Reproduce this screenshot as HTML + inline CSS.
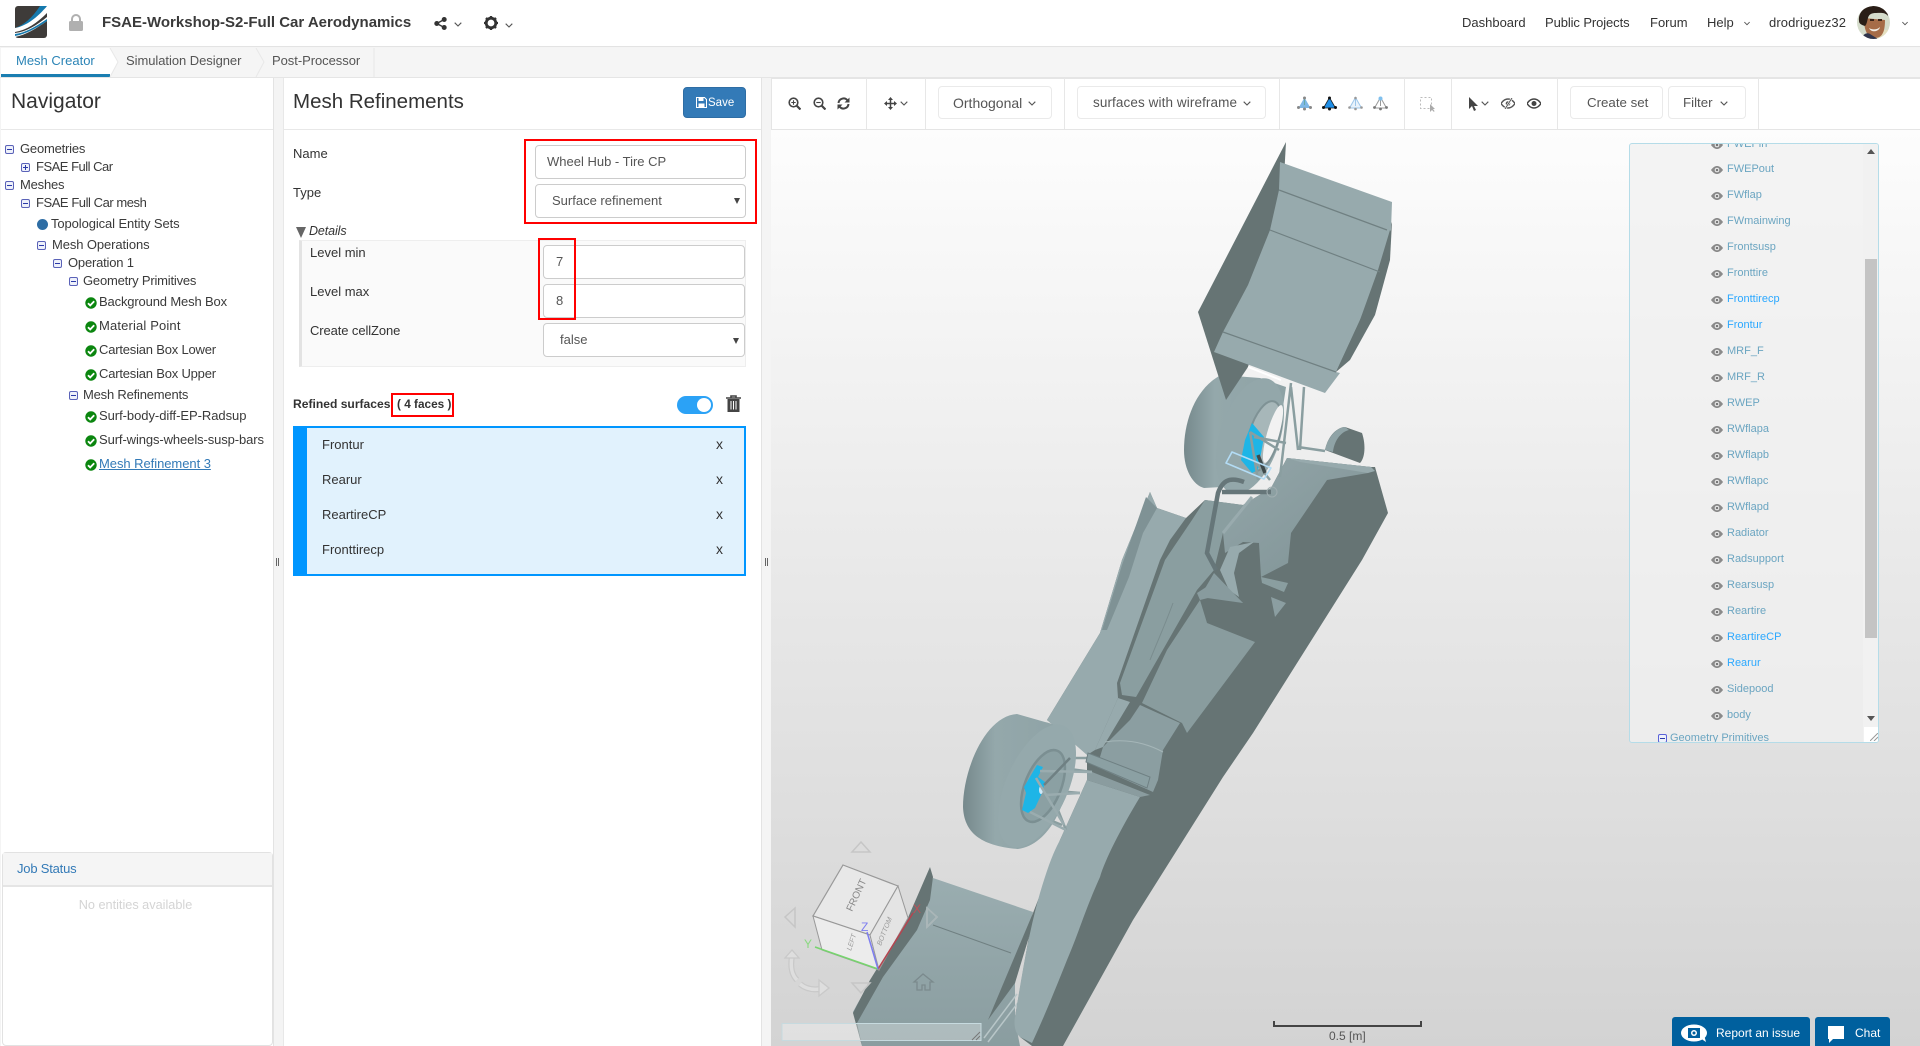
<!DOCTYPE html>
<html lang="en"><head><meta charset="utf-8"><title>FSAE-Workshop-S2-Full Car Aerodynamics</title>
<style>
*{box-sizing:border-box}
html,body{margin:0;padding:0;width:1920px;height:1046px;overflow:hidden;background:#f4f4f4;font-family:"Liberation Sans",sans-serif;font-size:13px;color:#333}
.a{position:absolute}
.t{position:absolute;white-space:nowrap;line-height:20px;height:20px}
.ar{font-family:"Liberation Sans",Arial,sans-serif;color:#555}
.tree{letter-spacing:-.2px;color:#3a3a3a}
.bx{position:absolute;width:9px;height:9px;border:1px solid #5a62b8;border-radius:2px;background:#eef1fa}
.bx:before{content:"";position:absolute;left:1px;right:1px;top:3px;height:1px;background:#2b3aa8}
.bx.p:after{content:"";position:absolute;top:1px;bottom:1px;left:3px;width:1px;background:#2b3aa8}
.inp{position:absolute;background:#fff;border:1px solid #ccc;border-radius:4px}
.red{position:absolute;border:2px solid #f00}
.btn{position:absolute;height:33px;border:1px solid #eaeaea;border-radius:4px;background:#fff}
.sep{position:absolute;top:78px;height:51px;width:1px;background:#e7e7e7}
.fi{position:absolute;left:1727px;font-size:11px;color:#6ba5c1;line-height:14px;white-space:nowrap}
.fi.s{color:#2ba8ff}
.ey{position:absolute;left:1711px;width:12px;height:8px}
.chev{position:absolute;width:8px;height:5px}
</style></head><body>
<svg width="0" height="0" style="position:absolute">
<defs>
<linearGradient id="wg" x1="0" y1="0" x2="0" y2="1"><stop offset="0" stop-color="#9aadb0"/><stop offset="1" stop-color="#8a9da0"/></linearGradient>
<linearGradient id="tg" x1="0" y1="0" x2="1" y2="0"><stop offset="0" stop-color="#76898c"/><stop offset=".3" stop-color="#94a8ab"/><stop offset="1" stop-color="#8ea2a5"/></linearGradient>
<linearGradient id="eg" x1="0" y1="0" x2="1" y2="1"><stop offset="0" stop-color="#93a6a9"/><stop offset="1" stop-color="#7f9295"/></linearGradient>
</defs>
<symbol id="eye" viewBox="0 0 12 8"><path d="M0 4C2 1.200 4 0 6 0s4 1.200 6 4c-2 2.800-4 4-6 4S2 6.800 0 4z" fill="#8a8a8a"/><circle cx="6" cy="4" r="2.300" fill="#f3f3f3"/><circle cx="6" cy="4" r="1.300" fill="#777"/></symbol>
<symbol id="chk" viewBox="0 0 12 12"><circle cx="6" cy="6" r="5.700" fill="#0b860f"/><path d="M3 6.200l2.200 2.200L9.200 4.200" fill="none" stroke="#fff" stroke-width="1.800"/></symbol>
<symbol id="ch" viewBox="0 0 8 5"><path d="M.7.7L4 4l3.300-3.300" fill="none" stroke="#555" stroke-width="1.100"/></symbol>
</svg>

<!-- header -->
<div class="a" style="left:0;top:0;width:1920px;height:47px;background:#fff;border-bottom:1px solid #e3e3e3"></div>
<svg class="a" style="left:15px;top:6px" width="32" height="32" viewBox="0 0 32 32"><rect width="32" height="32" rx="3" fill="#3e3b39"/><path d="M0 22C10 20 21 12 32 0v7C22 17 12 24 0 26z" fill="#fff"/><path d="M0 22C9 19 17 12 25 0h7C22 12 11 20 0 22z" fill="#1579ad"/><path d="M0 27C11 26 22 19 32 11v4C22 22 11 29 0 31z" fill="#fff"/><path d="M0 28c10-1 20-7 32-15v2C22 22 11 28 0 30z" fill="#1579ad"/></svg>
<svg class="a" style="left:69px;top:14px" width="14" height="17" viewBox="0 0 14 17"><path d="M3 8V5a4 4 0 0 1 8 0v3" fill="none" stroke="#b0b0b0" stroke-width="2"/><rect y="7" width="14" height="10" rx="1.500" fill="#b0b0b0"/></svg>
<div class="t" style="left:102px;top:13px;font-size:15px;font-weight:bold;color:#3a3a3a">FSAE-Workshop-S2-Full Car Aerodynamics</div>
<svg class="a" style="left:434px;top:17px" width="13" height="13" viewBox="0 0 13 13" fill="#333"><circle cx="2.800" cy="6.500" r="2.500"/><circle cx="10.200" cy="2.500" r="2.500"/><circle cx="10.200" cy="10.500" r="2.500"/><path d="M2.800 6.500l7.400-4M2.800 6.500l7.400 4" stroke="#333" stroke-width="1.300"/></svg>
<svg class="chev" style="left:454px;top:22px"><use href="#ch"/></svg>
<svg class="a" style="left:484px;top:16px" width="14" height="14" viewBox="0 0 14 14"><circle cx="7" cy="7" r="4.800" fill="none" stroke="#333" stroke-width="2.800"/><path d="M7 0v3M7 11v3M0 7h3M11 7h3M2 2l2 2M10 10l2 2M12 2l-2 2M4 10l-2 2" stroke="#333" stroke-width="2.300"/></svg>
<svg class="chev" style="left:505px;top:23px"><use href="#ch"/></svg>
<div class="t" style="left:1462px;top:13px">Dashboard</div>
<div class="t" style="left:1545px;top:13px;letter-spacing:-.1px">Public Projects</div>
<div class="t" style="left:1650px;top:13px">Forum</div>
<div class="t" style="left:1707px;top:13px">Help</div>
<svg class="chev" style="left:1743px;top:21px;transform:scale(.8)"><use href="#ch"/></svg>
<div class="t" style="left:1769px;top:13px;letter-spacing:.1px">drodriguez32</div>
<svg class="a" style="left:1857px;top:6px" width="33" height="33" viewBox="0 0 33 33"><defs><clipPath id="av"><circle cx="16.500" cy="16.500" r="16.500"/></clipPath></defs><g clip-path="url(#av)"><rect width="33" height="33" fill="#d5dccb"/><rect y="24" x="20" width="13" height="9" fill="#e6e0c0"/><path d="M7 12c0 12 3 20 11 20s10-8 10-18z" fill="#a66c48"/><path d="M2 15C1 5 9 0 17 0s14 4 14 10c-3-4-8-3-12-3-4 0-7 1-8 5-1 3-1 6-3 8-3-1-6-2-6-5z" fill="#2a1e17"/><path d="M4 33c2-5 6-7 9-5l8 5z" fill="#30344a"/><path d="M12 22c3 2 8 2 11-1-1 5-9 6-11 1z" fill="#f3eee6"/><rect x="13" y="13" width="4" height="2" fill="#3a2418"/><rect x="21" y="13" width="4" height="2" fill="#3a2418"/></g></svg>
<svg class="chev" style="left:1901px;top:21px;transform:scale(.8)"><use href="#ch"/></svg>

<!-- tabs -->
<div class="a" style="left:0;top:48px;width:1920px;height:30px;background:#f5f5f5;border-bottom:1px solid #e5e5e5"></div>
<div class="a" style="left:1px;top:48px;width:109px;height:29px;background:#fff;border-bottom:3px solid #1a7eb1"></div>
<svg class="a" style="left:108px;top:48px" width="270" height="29" viewBox="0 0 270 29" fill="none" stroke="#e8e8e8"><path d="M2 0l8 14-8 15" fill="#fff"/><path d="M148 0l8 14-8 15M266 0v29"/></svg>
<div class="t" style="left:16px;top:51px;color:#2b84b6">Mesh Creator</div>
<div class="t" style="left:126px;top:51px;color:#555;letter-spacing:-.05px">Simulation Designer</div>
<div class="t" style="left:272px;top:51px;color:#555;letter-spacing:-.05px">Post-Processor</div>

<!-- left panel -->
<div class="a" style="left:1px;top:78px;width:273px;height:968px;background:#fff;border-right:1px solid #e3e3e3"></div>
<div class="a" style="left:1px;top:129px;width:272px;height:1px;background:#e8e8e8"></div>
<div class="t" style="left:11px;top:92px;font-size:21px;color:#333">Navigator</div>
<div class="bx" style="left:5px;top:145px"></div><div class="t tree" style="left:20px;top:139px">Geometries</div>
<div class="bx p" style="left:21px;top:163px"></div><div class="t tree" style="left:36px;top:157px;letter-spacing:-.5px">FSAE Full Car</div>
<div class="bx" style="left:5px;top:181px"></div><div class="t tree" style="left:20px;top:175px">Meshes</div>
<div class="bx" style="left:21px;top:199px"></div><div class="t tree" style="left:36px;top:193px;letter-spacing:-.45px">FSAE Full Car mesh</div>
<div class="a" style="left:37px;top:219px;width:11px;height:11px;border-radius:50%;background:#2e6da4"></div><div class="t tree" style="left:51px;top:214px;letter-spacing:-.1px">Topological Entity Sets</div>
<div class="bx" style="left:37px;top:241px"></div><div class="t tree" style="left:52px;top:235px;letter-spacing:-.1px">Mesh Operations</div>
<div class="bx" style="left:53px;top:259px"></div><div class="t tree" style="left:68px;top:253px">Operation 1</div>
<div class="bx" style="left:69px;top:277px"></div><div class="t tree" style="left:83px;top:271px">Geometry Primitives</div>
<svg class="a" style="left:85px;top:297px" width="12" height="12"><use href="#chk"/></svg><div class="t tree" style="left:99px;top:292px;letter-spacing:-.15px">Background Mesh Box</div>
<svg class="a" style="left:85px;top:321px" width="12" height="12"><use href="#chk"/></svg><div class="t tree" style="left:99px;top:316px;letter-spacing:.15px">Material Point</div>
<svg class="a" style="left:85px;top:345px" width="12" height="12"><use href="#chk"/></svg><div class="t tree" style="left:99px;top:340px">Cartesian Box Lower</div>
<svg class="a" style="left:85px;top:369px" width="12" height="12"><use href="#chk"/></svg><div class="t tree" style="left:99px;top:364px">Cartesian Box Upper</div>
<div class="bx" style="left:69px;top:391px"></div><div class="t tree" style="left:83px;top:385px">Mesh Refinements</div>
<svg class="a" style="left:85px;top:411px" width="12" height="12"><use href="#chk"/></svg><div class="t tree" style="left:99px;top:406px;letter-spacing:-.05px">Surf-body-diff-EP-Radsup</div>
<svg class="a" style="left:85px;top:435px" width="12" height="12"><use href="#chk"/></svg><div class="t tree" style="left:99px;top:430px;letter-spacing:-.1px">Surf-wings-wheels-susp-bars</div>
<svg class="a" style="left:85px;top:459px" width="12" height="12"><use href="#chk"/></svg><div class="t tree" style="left:99px;top:454px;color:#337ab7;text-decoration:underline;letter-spacing:-.05px">Mesh Refinement 3</div>
<div class="a" style="left:2px;top:852px;width:271px;height:194px;border:1px solid #e2e2e2;border-radius:4px;background:#fff"></div>
<div class="a" style="left:3px;top:853px;width:269px;height:34px;background:#f5f5f5;border-bottom:2px solid #e5e5e5"></div>
<div class="t" style="left:17px;top:859px;color:#337ab7;letter-spacing:-.2px">Job Status</div>
<div class="t" style="left:1px;width:269px;top:895px;text-align:center;color:#d4d4d4;font-size:12.700px">No entities available</div>
<div class="a" style="left:276px;top:558px;width:1px;height:8px;background:#666;box-shadow:2px 0 #666"></div>

<!-- middle panel -->
<div class="a" style="left:283px;top:78px;width:479px;height:968px;background:#fff;border-left:1px solid #e8e8e8;border-right:1px solid #e3e3e3"></div>
<div class="a" style="left:284px;top:129px;width:477px;height:1px;background:#e8e8e8"></div>
<div class="t" style="left:293px;top:92px;font-size:20.500px;color:#333">Mesh Refinements</div>
<div class="a" style="left:683px;top:87px;width:63px;height:31px;background:#337ab7;border:1px solid #2e6da4;border-radius:4px"></div>
<svg class="a" style="left:696px;top:97px" width="11" height="11" viewBox="0 0 11 11"><path d="M.5.500h8l2 2v8H.5z" fill="none" stroke="#fff"/><rect x="2.500" y="1" width="5" height="3" fill="#fff"/><rect x="2.500" y="6.500" width="6" height="3.500" fill="#fff"/></svg>
<div class="t" style="left:708px;top:93px;color:#fff;font-size:11.500px">Save</div>

<div class="t" style="left:293px;top:144px">Name</div>
<div class="t" style="left:293px;top:183px">Type</div>
<div class="inp" style="left:535px;top:145px;width:211px;height:34px"></div>
<div class="t ar" style="left:547px;top:152px">Wheel Hub - Tire CP</div>
<div class="inp" style="left:535px;top:184px;width:211px;height:34px"></div>
<div class="t ar" style="left:552px;top:191px">Surface refinement</div>
<div class="a" style="left:734px;top:198px;border:3px solid transparent;border-top:6px solid #444;border-bottom:0"></div>
<div class="red" style="left:524px;top:139px;width:233px;height:85px"></div>

<div class="a" style="left:296px;top:227px;border:5.500px solid transparent;border-top:11px solid #666;border-bottom:0"></div>
<div class="t" style="left:309px;top:221px;font-style:italic;font-size:12.500px;letter-spacing:-.1px">Details</div>
<div class="a" style="left:299px;top:240px;width:447px;height:127px;background:#fafafa;border:1px solid #eee;border-left:3px solid #e3e3e3"></div>
<div class="t" style="left:310px;top:243px">Level min</div>
<div class="t" style="left:310px;top:282px">Level max</div>
<div class="t" style="left:310px;top:321px;letter-spacing:-.1px">Create cellZone</div>
<div class="inp" style="left:543px;top:245px;width:202px;height:34px"></div>
<div class="t ar" style="left:556px;top:252px">7</div>
<div class="inp" style="left:543px;top:284px;width:202px;height:34px"></div>
<div class="t ar" style="left:556px;top:291px">8</div>
<div class="inp" style="left:543px;top:323px;width:202px;height:34px"></div>
<div class="t ar" style="left:560px;top:330px">false</div>
<div class="a" style="left:733px;top:338px;border:3px solid transparent;border-top:6px solid #444;border-bottom:0"></div>
<div class="red" style="left:538px;top:238px;width:38px;height:82px"></div>

<div class="t" style="left:293px;top:394px;font-weight:bold;font-size:12.100px">Refined surfaces</div>
<div class="red" style="left:391px;top:393px;width:63px;height:24px"></div>
<div class="t" style="left:397px;top:394px;font-weight:bold;font-size:11.800px">( 4 faces )</div>
<div class="a" style="left:677px;top:396px;width:36px;height:18px;border-radius:9px;background:#2ba2f6"></div>
<div class="a" style="left:697px;top:398px;width:14px;height:14px;border-radius:50%;background:#fff"></div>
<svg class="a" style="left:726px;top:395px" width="15" height="17" viewBox="0 0 15 17"><path d="M0 3h15M5 3V1h5v2" fill="none" stroke="#444" stroke-width="1.600"/><path d="M1.500 4h12v13h-12z" fill="#444"/><path d="M5 6v8.500M7.500 6v8.500M10 6v8.500" stroke="#fff" stroke-width="1"/></svg>
<div class="a" style="left:293px;top:426px;width:453px;height:150px;background:#e1f2fd;border:2px solid #0096ff;border-left:14px solid #0096ff"></div>
<div class="t" style="left:322px;top:435px">Frontur</div><div class="t" style="left:716px;top:434px;font-size:14px">x</div>
<div class="t" style="left:322px;top:470px">Rearur</div><div class="t" style="left:716px;top:469px;font-size:14px">x</div>
<div class="t" style="left:322px;top:505px">ReartireCP</div><div class="t" style="left:716px;top:504px;font-size:14px">x</div>
<div class="t" style="left:322px;top:540px">Fronttirecp</div><div class="t" style="left:716px;top:539px;font-size:14px">x</div>
<div class="a" style="left:765px;top:558px;width:1px;height:8px;background:#666;box-shadow:2px 0 #666"></div>

<!-- viewer -->
<div class="a" style="left:771px;top:130px;width:1149px;height:916px;background:linear-gradient(#fdfdfd,#d3d3d3)"></div>
<svg class="a" style="left:771px;top:130px" width="1149" height="916" viewBox="771 130 1149 916">
<!-- front wing -->
<path d="M933 878L1033 912 1015 983 1015 1020 1020 1046H862L853 1012C880 960 920 925 933 878z" fill="url(#wg)"/>
<path d="M927 857l6 20-3 23-13 30-34 47-26 46 5 23-9-33 17-33 37-60 23-53z" fill="#667474"/>
<path d="M933 925L1011 953" stroke="#708082" stroke-width="1" fill="none"/>
<path d="M1033 913L988 1020 1015 983 1032 927z" fill="#667474"/>
<path d="M984 1038L1017 994M988 1042L1020 1000" stroke="#b8c6c8" stroke-width="1.500" fill="none"/>

<!-- silhouette base -->
<path d="M1150 492L1157 508 1186 518 1205 500 1243 505 1271 488 1287 458 1371 467 1375 467 1388 513 1362 560 1253 733 1223 777 1133 920 1063 1046H1032L1020 1037 1015 1017 1033 913 1047 877 1060 840 1087 780 1087 752 1047 720 1100 633 1122 560z" fill="#667474"/>
<!-- nose light -->
<path d="M1020 1037C1014 1032 1014 1022 1015 1017 1022 975 1028 935 1040 893 1047 870 1052 855 1060 840L1087 780 1140 797C1120 830 1105 860 1100 877 1085 910 1078 935 1067 960 1055 990 1045 1015 1032 1043z" fill="#97aaad"/>
<!-- sidepod -->
<path d="M1047 720L1100 633 1122 560 1150 492 1157 508 1186 518 1170 540 1160 560 1117 683 1118 698 1095 750 1087 755z" fill="#97aaad"/>
<path d="M1146 497L1157 508 1143 533 1129 577 1107 630 1102 630 1122 565z" fill="#7f9295"/>
<!-- centre -->
<path d="M1205 500L1243 505 1223 533 1214 570 1197 590 1136 697 1122 695 1120 683 1165 560 1192 520z" fill="#8a9ea0"/>
<path d="M1173 603C1165 625 1158 640 1150 660" stroke="#7a8c8e" fill="none"/>
<path d="M1118 698L1130 702 1103 747 1095 750z" fill="#97aaad"/>
<!-- cockpit panel -->
<path d="M1200 600L1207 623 1255 642 1187 733 1182 723 1142 703 1167 650z" fill="#899c9e"/>
<path d="M1197 593L1217 580 1243 603 1220 595 1200 600z" fill="#889b9e"/>
<!-- nose plate -->
<path d="M1140 705L1180 723 1163 750 1158 780 1153 792 1097 767 1103 747 1130 720z" fill="#8b9ea1"/>
<path d="M1105 742C1130 738 1150 745 1163 752" stroke="#a5b6b8" stroke-width="1" fill="none"/>
<path d="M1087 770L1150 795 1140 797 1087 780z" fill="#8a9c9f"/>
<!-- engine cover -->
<path d="M1287 458L1371 467 1368 473 1327 480 1291 533 1288 563 1261 577 1259 543 1243 542 1225 553 1223 533 1243 505 1271 488z" fill="url(#eg)"/>
<path d="M1287 458L1371 467 1375 471 1368 473 1300 462z" fill="#97aaad"/>
<path d="M1220 570L1230 547 1254 542 1239 553 1234 573 1239 597 1229 590z" fill="#97aaad"/>
<path d="M1200 597L1243 603 1214 573z" fill="#889b9e"/>
<path d="M1271 597L1286 603 1275 617z" fill="#8b9ea1"/>
<path d="M1261 577L1288 583 1284 592 1262 583z" fill="#8a9ea0"/>
<!-- rear-side round fin -->
<path d="M1325 450C1328 435 1338 427 1345 427L1362 433C1366 445 1365 458 1360 463z" fill="#667474"/>
<path d="M1325 450C1328 436 1338 427 1345 427L1349 430C1340 432 1334 442 1333 452z" fill="#8fa3a6"/>
<!-- rear tire -->
<path d="M1221 375C1196 388 1184 420 1184 450 1184 470 1193 485 1204 488L1240 486 1278 440 1286 387 1260 378z" fill="url(#tg)"/>
<ellipse cx="1250" cy="436" rx="30" ry="60" transform="rotate(18 1250 436)" fill="#93a7aa"/>
<ellipse cx="1264" cy="436" rx="15" ry="36" transform="rotate(16 1264 436)" fill="#a7b7b9" stroke="#7f9295" stroke-width="2"/>
<ellipse cx="1273" cy="434" rx="6" ry="30" transform="rotate(16 1273 434)" fill="#f2f2f2"/>
<path d="M1252 423L1264 437 1258 470 1252 473 1241 460 1245 440z" fill="#1eb5e6"/>
<g fill="none" stroke="#8a9ea0" stroke-width="2.500"><path d="M1291 383L1280 477M1291 387L1298 450M1304 387L1300 450M1250 432L1279 450M1254 437L1286 443M1250 432L1258 480M1254 460L1270 480M1298 447L1325 451"/></g>
<path d="M1258 455l7 18" stroke="#3f4a4b" stroke-width="3.500"/>
<path d="M1232 452L1271 468 1264 479 1226 463z" fill="none" stroke="#b3dcf5" stroke-width="1.600" stroke-linejoin="round"/>
<path d="M1223 533L1252 497" stroke="#99abae" stroke-width="3"/>
<path d="M1244 482C1228 476 1222 482 1218 493L1207 553 1216 570M1222 492L1271 492" fill="none" stroke="#667679" stroke-width="4.500"/>
<circle cx="1272" cy="492" r="5" fill="none" stroke="#a0aeb0"/>
<!-- rear wing -->
<path d="M1286 142L1198 312 1226 400 1248 367 1280 250z" fill="#667474"/>
<path d="M1392 222L1390 260 1375 315 1350 360 1336 372z" fill="#667474"/>
<path d="M1280 162L1392 202 1391 230 1381 270 1360 320 1336 372 1340 373 1325 393 1214 352 1223 332 1248 285 1270 230 1279 190z" fill="#97aaad"/>
<path d="M1391 232L1386 262 1372 305 1345 360 1336 372 1360 320 1378 270 1390 230z" fill="#667474"/>
<g stroke="#708082" stroke-width="1.200" fill="none"><path d="M1279 190L1387 230M1270 230L1380 272M1223 332L1336 372"/></g>
<path d="M1248 367L1281 380" stroke="#fff" stroke-width="2"/>
<!-- front tire -->
<g fill="none" stroke="#8a9ea0" stroke-width="2.500"><path d="M1040 765L1092 772M1070 758L1090 758M1045 790L1080 793M1036 778L1062 820M1030 812L1062 825M1050 790L1066 830"/></g>
<path d="M1017 714C985 716 963 770 963 807 964 832 980 846 1018 849 1050 845 1070 800 1070 760 1070 735 1060 725 1045 722z" fill="url(#tg)"/>
<ellipse cx="1037" cy="786" rx="31" ry="66" transform="rotate(24 1037 786)" fill="#95a9ac"/>
<ellipse cx="1043" cy="786" rx="18" ry="38" transform="rotate(22 1043 786)" fill="#8ba0a3" stroke="#7b8f92" stroke-width="2.500"/>
<path d="M1037 765L1043 767 1038 777 1045 782 1042 793 1035 808 1028 813 1022 810 1026 793 1024 787z" fill="#1eb5e6"/>
<ellipse cx="1041" cy="790" rx="2" ry="4" fill="#cfe8f8"/>
<g fill="none" stroke="#9aacaf" stroke-width="2.500"><path d="M1040 771L1092 772M1045 795L1080 793M1036 778L1064 825M1030 812L1066 830"/></g>
<path d="M1044 785L1070 758" stroke="#6f8083" stroke-width="2.500"/>
<path d="M1088 753L1150 777 1147 788 1086 762z" fill="#8ba0a3" stroke="#6f8083"/>
<!-- gizmo -->
<g fill="none" stroke="#c6c6c6" stroke-width="1.500"><path d="M861 842l-9 10h18zM795 908l-10 9 10 10zM927 908l10 9-10 10zM852 983l9 10 9-10z"/></g>
<path d="M927 908l10 9-10 10z" fill="none" stroke="#a9b6b8" stroke-width="1.500"/>
<g fill="none"><path d="M792 956C790 968 792 975 797 980M800 984C806 989 813 990 820 989" stroke="#c9c9c9" stroke-width="6"/><path d="M792 956C790 968 792 975 797 980M800 984C806 989 813 990 820 989" stroke="#dedede" stroke-width="3.500"/></g>
<path d="M792 950l-7 8h14zM829 988l-10-8v16z" fill="#dedede" stroke="#c9c9c9" stroke-width="1.300"/>
<path d="M843 865L898 886 870 935 813 916z" fill="#e8e8e8" stroke="#999" stroke-width="1.200"/>
<path d="M813 916L870 935 879 970 822 950z" fill="#ececec" stroke="#999" stroke-width="1"/>
<path d="M870 935L898 886 908 918 879 970z" fill="#e4e4e4" stroke="#999" stroke-width="1"/>
<text x="852" y="912" font-size="10" fill="#888" transform="rotate(-65 852 912)" font-family="Liberation Sans,sans-serif">FRONT</text>
<text x="851" y="951" font-size="7" fill="#999" font-style="italic" transform="rotate(-72 851 951)" font-family="Liberation Sans,sans-serif">LEFT</text>
<text x="881" y="946" font-size="7" fill="#999" font-style="italic" transform="rotate(-68 881 946)" font-family="Liberation Sans,sans-serif">BOTTOM</text>
<path d="M878 969L913 913" stroke="#b5444f" stroke-width="1.500"/><path d="M878 969L815 947" stroke="#77d46e" stroke-width="1.500"/><path d="M878 969L867 932" stroke="#7d7df0" stroke-width="1.500"/>
<text x="913" y="913" font-size="12" fill="#c05058" font-family="Liberation Sans,sans-serif">X</text>
<text x="804" y="948" font-size="12" fill="#8ad980" font-family="Liberation Sans,sans-serif">Y</text>
<text x="861" y="931" font-size="12" fill="#7d7df0" font-family="Liberation Sans,sans-serif">Z</text>
<path d="M923 974l-9 8h3v8h5v-5h3v5h5v-8h3z" fill="none" stroke="#7b8a8d" stroke-width="1.300"/>
<rect x="782" y="1023.500" width="199" height="17" fill="#fff" fill-opacity=".3" stroke="#c6dadf"/>
<path d="M972 1040l8-8M976 1040l4-4" stroke="#777"/>
<!-- scale -->
<path d="M1274 1021v5h147v-5" fill="none" stroke="#444" stroke-width="2"/>
</svg>

<!-- toolbar -->
<div class="a" style="left:771px;top:78px;width:1149px;height:52px;background:#fff;border-top:1px solid #e5e5e5;border-bottom:1px solid #e5e5e5;border-left:1px solid #e5e5e5"></div>
<div class="sep" style="left:866px"></div><div class="sep" style="left:925px"></div><div class="sep" style="left:1064px"></div><div class="sep" style="left:1279px"></div><div class="sep" style="left:1404px"></div><div class="sep" style="left:1451px"></div><div class="sep" style="left:1557px"></div><div class="sep" style="left:1758px"></div>
<svg class="a" style="left:788px;top:97px" width="13" height="13" viewBox="0 0 13 13" fill="none" stroke="#444" stroke-width="1.600"><circle cx="5.500" cy="5.500" r="4.300"/><path d="M8.500 8.500L12.500 12.500" stroke-width="2.200"/><path d="M3.300 5.500h4.400M5.500 3.300v4.400" stroke-width="1.100"/></svg>
<svg class="a" style="left:813px;top:97px" width="13" height="13" viewBox="0 0 13 13" fill="none" stroke="#444" stroke-width="1.600"><circle cx="5.500" cy="5.500" r="4.300"/><path d="M8.500 8.500L12.500 12.500" stroke-width="2.200"/><path d="M3.300 5.500h4.400" stroke-width="1.100"/></svg>
<svg class="a" style="left:837px;top:97px" width="13" height="13" viewBox="0 0 13 13" fill="none" stroke="#444" stroke-width="2"><path d="M1.500 6A5 5 0 0 1 10.500 3.500M11.500 7A5 5 0 0 1 2.500 9.500"/><path d="M12.500.5v5h-5zM.5 12.500v-5h5z" fill="#444" stroke="none"/></svg>
<svg class="a" style="left:884px;top:97px" width="13" height="13" viewBox="0 0 13 13" fill="#444"><path d="M6.500 0L9 3H4zM6.500 13L4 10h5zM0 6.500L3 4v5zM13 6.500L10 9V4z"/><path d="M6.500 2v9M2 6.500h9" stroke="#444" stroke-width="1.500"/></svg>
<svg class="chev" style="left:900px;top:101px"><use href="#ch"/></svg>
<div class="btn" style="left:938px;top:86px;width:114px"></div>
<div class="t" style="left:953px;top:93px;font-size:14px;color:#555">Orthogonal</div>
<svg class="chev" style="left:1028px;top:101px"><use href="#ch"/></svg>
<div class="btn" style="left:1077px;top:86px;width:189px"></div>
<div class="t" style="left:1093px;top:93px;font-size:13.500px;color:#555;letter-spacing:.1px">surfaces with wireframe</div>
<svg class="chev" style="left:1243px;top:101px"><use href="#ch"/></svg>
<svg class="a" style="left:1297px;top:96px" width="15" height="15" viewBox="0 0 15 15"><path d="M7.500 1.500L1.500 12h12z" fill="#7fb8e6"/><path d="M7.500 1.500V9" stroke="#6aa" stroke-width="1"/><g fill="#888"><circle cx="7.500" cy="2" r="1.500"/><circle cx="1.500" cy="11.500" r="1.500"/><circle cx="13.500" cy="11.500" r="1.500"/><circle cx="7.500" cy="13" r="1.500"/></g></svg>
<svg class="a" style="left:1322px;top:96px" width="15" height="15" viewBox="0 0 15 15"><path d="M7.500 1.500L1.500 12h12z" fill="#1f8fe8" stroke="#222" stroke-width=".8"/><g fill="#111"><circle cx="7.500" cy="2" r="1.500"/><circle cx="1.500" cy="11.500" r="1.500"/><circle cx="13.500" cy="11.500" r="1.500"/><circle cx="7.500" cy="13" r="1.500"/></g></svg>
<svg class="a" style="left:1348px;top:96px" width="15" height="15" viewBox="0 0 15 15"><path d="M7.500 1.500L1.500 12h12zM7.500 2v8" fill="#e8f2fb" stroke="#9cc6ea" stroke-width="1"/><g fill="#999"><circle cx="7.500" cy="2" r="1.300"/><circle cx="1.500" cy="11.500" r="1.300"/><circle cx="13.500" cy="11.500" r="1.300"/><circle cx="7.500" cy="13" r="1.300"/></g></svg>
<svg class="a" style="left:1373px;top:96px" width="15" height="15" viewBox="0 0 15 15"><path d="M7.500 1.500L1.500 12h12zM7.500 2v8" fill="none" stroke="#999" stroke-width="1"/><circle cx="7.500" cy="2.500" r="2" fill="#7fc0ee"/><g fill="#777"><circle cx="1.500" cy="11.500" r="1.400"/><circle cx="13.500" cy="11.500" r="1.400"/><circle cx="7.500" cy="13" r="1.400"/></g></svg>
<svg class="a" style="left:1420px;top:97px" width="15" height="16" viewBox="0 0 15 16"><rect x=".5" y=".5" width="11" height="11" fill="none" stroke="#bbb" stroke-dasharray="2 2"/><path d="M10 7v8l2-2 2 2 .5-1-1.500-2h2z" fill="#aaa"/></svg>
<svg class="a" style="left:1468px;top:97px" width="10" height="14" viewBox="0 0 10 14"><path d="M1 0v12l3-3 2 5 2-1-2-4h4z" fill="#444"/></svg>
<svg class="chev" style="left:1481px;top:101px"><use href="#ch"/></svg>
<svg class="a" style="left:1501px;top:98px" width="14" height="11" viewBox="0 0 14 11"><path d="M0 5.500C2 2.500 4.500 1 7 1s5 1.500 7 4.500c-2 3-4.500 4.500-7 4.500S2 8.500 0 5.500z" fill="none" stroke="#555" stroke-width="1.400"/><circle cx="7" cy="5.500" r="2.300" fill="#555"/><path d="M11 0L4 11" stroke="#fff" stroke-width="2.200"/><path d="M11 0L4 11" stroke="#555" stroke-width="1"/></svg>
<svg class="a" style="left:1527px;top:98px" width="14" height="11" viewBox="0 0 14 11"><path d="M0 5.500C2 2.500 4.500 1 7 1s5 1.500 7 4.500c-2 3-4.500 4.500-7 4.500S2 8.500 0 5.500z" fill="none" stroke="#444" stroke-width="1.500"/><circle cx="7" cy="5.500" r="2.500" fill="#444"/></svg>
<div class="btn" style="left:1570px;top:86px;width:93px"></div>
<div class="t" style="left:1587px;top:93px;font-size:13.300px;color:#555">Create set</div>
<div class="btn" style="left:1668px;top:86px;width:78px"></div>
<div class="t" style="left:1683px;top:93px;font-size:13.300px;color:#555">Filter</div>
<svg class="chev" style="left:1720px;top:101px"><use href="#ch"/></svg>

<!-- face tree -->
<div class="a" style="left:1629px;top:143px;width:250px;height:600px;background:rgba(240,240,240,.75);border:1px solid #b5dce8;border-radius:3px;overflow:hidden">
<div class="a" style="left:233px;top:0;width:15px;height:598px;background:#f1f1f1"></div>
<div class="a" style="left:235px;top:115px;width:12px;height:379px;background:#c4c4c4"></div>
<div class="a" style="left:237px;top:5px;border:4px solid transparent;border-bottom:5px solid #555;border-top:0"></div>
<div class="a" style="left:237px;top:572px;border:4px solid transparent;border-top:5px solid #555;border-bottom:0"></div>
<div class="a" style="left:234px;top:583px;width:15px;height:16px;background:#fff"></div>
<svg class="a" style="left:240px;top:589px" width="8" height="8"><path d="M0 8L8 0M4 8L8 4" stroke="#999"/></svg>
</div>
<div class="a" style="left:1640px;top:144px;width:222px;height:598px;overflow:hidden">
<div class="fi" style="left:87px;top:-7px">FWEPin</div>
<svg class="ey" style="left:71px;top:-3px"><use href="#eye"/></svg>
<div class="bx" style="left:18px;top:590px;border-color:#5a62d8"></div>
<div class="fi" style="left:30px;top:587px">Geometry Primitives</div>
</div>
<svg class="ey" style="top:166px"><use href="#eye"/></svg><div class="fi" style="top:162px">FWEPout</div>
<svg class="ey" style="top:192px"><use href="#eye"/></svg><div class="fi" style="top:188px">FWflap</div>
<svg class="ey" style="top:218px"><use href="#eye"/></svg><div class="fi" style="top:214px">FWmainwing</div>
<svg class="ey" style="top:244px"><use href="#eye"/></svg><div class="fi" style="top:240px">Frontsusp</div>
<svg class="ey" style="top:270px"><use href="#eye"/></svg><div class="fi" style="top:266px">Fronttire</div>
<svg class="ey" style="top:296px"><use href="#eye"/></svg><div class="fi s" style="top:292px">Fronttirecp</div>
<svg class="ey" style="top:322px"><use href="#eye"/></svg><div class="fi s" style="top:318px">Frontur</div>
<svg class="ey" style="top:348px"><use href="#eye"/></svg><div class="fi" style="top:344px">MRF_F</div>
<svg class="ey" style="top:374px"><use href="#eye"/></svg><div class="fi" style="top:370px">MRF_R</div>
<svg class="ey" style="top:400px"><use href="#eye"/></svg><div class="fi" style="top:396px">RWEP</div>
<svg class="ey" style="top:426px"><use href="#eye"/></svg><div class="fi" style="top:422px">RWflapa</div>
<svg class="ey" style="top:452px"><use href="#eye"/></svg><div class="fi" style="top:448px">RWflapb</div>
<svg class="ey" style="top:478px"><use href="#eye"/></svg><div class="fi" style="top:474px">RWflapc</div>
<svg class="ey" style="top:504px"><use href="#eye"/></svg><div class="fi" style="top:500px">RWflapd</div>
<svg class="ey" style="top:530px"><use href="#eye"/></svg><div class="fi" style="top:526px">Radiator</div>
<svg class="ey" style="top:556px"><use href="#eye"/></svg><div class="fi" style="top:552px">Radsupport</div>
<svg class="ey" style="top:582px"><use href="#eye"/></svg><div class="fi" style="top:578px">Rearsusp</div>
<svg class="ey" style="top:608px"><use href="#eye"/></svg><div class="fi" style="top:604px">Reartire</div>
<svg class="ey" style="top:634px"><use href="#eye"/></svg><div class="fi s" style="top:630px">ReartireCP</div>
<svg class="ey" style="top:660px"><use href="#eye"/></svg><div class="fi s" style="top:656px">Rearur</div>
<svg class="ey" style="top:686px"><use href="#eye"/></svg><div class="fi" style="top:682px">Sidepood</div>
<svg class="ey" style="top:712px"><use href="#eye"/></svg><div class="fi" style="top:708px">body</div>

<!-- scale text + buttons -->
<div class="t" style="left:1329px;top:1026px;font-size:12px;color:#555">0.5 [m]</div>
<div class="a" style="left:1672px;top:1017px;width:138px;height:29px;background:#00609e;border-radius:3px 3px 0 0"></div>
<svg class="a" style="left:1681px;top:1024px" width="27" height="18" viewBox="0 0 27 18"><ellipse cx="13" cy="9" rx="13" ry="8.500" fill="#fff"/><path d="M19 14l6 4-2-7z" fill="#fff"/><rect x="7" y="4" width="12" height="10" fill="#00609e"/><circle cx="13" cy="9" r="3" fill="#fff"/><circle cx="13" cy="9" r="1.500" fill="#00609e"/></svg>
<div class="t" style="left:1716px;top:1023px;font-size:12px;color:#fff">Report an issue</div>
<div class="a" style="left:1815px;top:1017px;width:75px;height:29px;background:#00609e;border-radius:3px 3px 0 0"></div>
<svg class="a" style="left:1827px;top:1025px" width="18" height="18" viewBox="0 0 18 18"><path d="M1 1h16v13H6l-4 4v-4H1z" fill="#fff"/></svg>
<div class="t" style="left:1855px;top:1023px;font-size:12px;color:#fff">Chat</div>
</body></html>
